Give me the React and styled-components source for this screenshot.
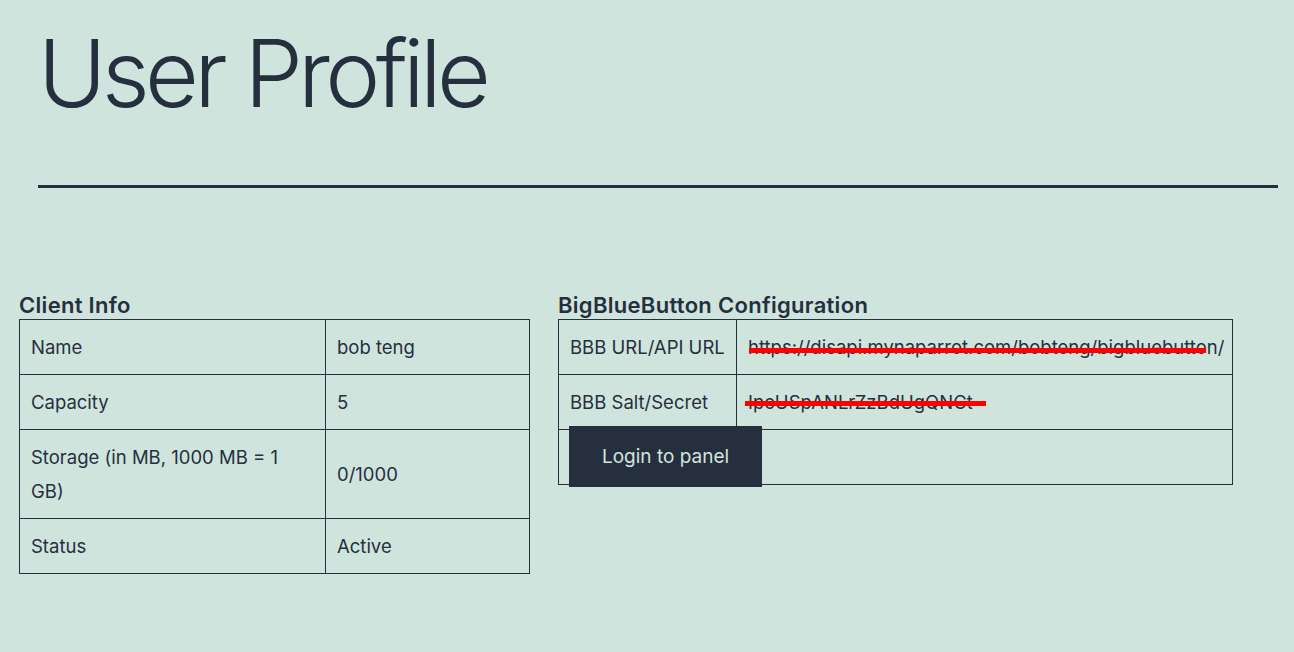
import React from 'react';
import styled, { createGlobalStyle } from 'styled-components';

const GlobalStyle = createGlobalStyle`
    html, body {
        margin: 0;
        padding: 0;
        background: #d0e4de;
    }
    body {
        font-family: Inter, "Noto Sans", sans-serif;
        color: #262f3d;
    }
`;

const Page = styled.div`
    min-height: 652px;
    background: #d0e4de;
    padding-top: 18px;
`;

const Header = styled.header`
    padding: 0 16px 0 38px;
`;

const Title = styled.h1`
    margin: 0;
    font-size: 93px;
    font-weight: 300;
    line-height: 1.2;
    letter-spacing: -4.7px;
`;

const Divider = styled.div`
    height: 3px;
    margin-top: 55px;
    background: #262f3d;
`;

const Content = styled.main`
    display: flex;
    align-items: flex-start;
    gap: 28px;
    margin-top: 104px;
    padding-left: 19px;
`;

const Section = styled.section`
    display: flex;
    flex-direction: column;
`;

const SectionTitle = styled.h2`
    margin: 0 0 1px;
    font-size: 22px;
    font-weight: 600;
    line-height: 26px;
    letter-spacing: 0.3px;
`;

const Table = styled.table`
    border-collapse: collapse;
    table-layout: fixed;
    width: ${(p) => p.width}px;
`;

const Cell = styled.td`
    position: relative;
    border: 1px solid #262f3d;
    padding: 10px ${(p) => (p.narrow ? 18 : 11)}px 10px 11px;
    font-size: 18.5px;
    line-height: 34px;
    vertical-align: middle;
    white-space: ${(p) => (p.nowrap ? 'nowrap' : 'normal')};
`;

const Redact = styled.span`
    position: absolute;
    height: 5px;
    background: #ff0000;
    pointer-events: none;
`;

const Button = styled.button`
    display: block;
    width: 193px;
    height: 61px;
    margin: -14px 0 -13px -1px;
    padding: 0;
    border: none;
    background: #262f3d;
    color: #d3e4df;
    font-family: inherit;
    font-size: 19px;
    cursor: pointer;
`;

const clientRows = [
    ['Name', 'bob teng'],
    ['Capacity', '5'],
    ['Storage (in MB, 1000 MB = 1 GB)', '0/1000'],
    ['Status', 'Active'],
];

function App() {
    return (
        <Page>
            <GlobalStyle />
            <Header>
                <Title>User Profile</Title>
                <Divider />
            </Header>

            <Content>
                <Section>
                    <SectionTitle>Client Info</SectionTitle>
                    <Table width={510}>
                        <colgroup>
                            <col style={{ width: 306 }} />
                            <col style={{ width: 204 }} />
                        </colgroup>
                        <tbody>
                            {clientRows.map(([label, value]) => (
                                <tr key={label}>
                                    <Cell narrow>{label}</Cell>
                                    <Cell>{value}</Cell>
                                </tr>
                            ))}
                        </tbody>
                    </Table>
                </Section>

                <Section>
                    <SectionTitle>BigBlueButton Configuration</SectionTitle>
                    <Table width={674}>
                        <colgroup>
                            <col style={{ width: 178 }} />
                            <col style={{ width: 496 }} />
                        </colgroup>
                        <tbody>
                            <tr>
                                <Cell nowrap>BBB URL/API URL</Cell>
                                <Cell nowrap>
                                    https://disapi.mynaparrot.com/bobteng/bigbluebutton/
                                    <Redact style={{ left: 12, top: 28, width: 457 }} />
                                </Cell>
                            </tr>
                            <tr>
                                <Cell nowrap>BBB Salt/Secret</Cell>
                                <Cell nowrap>
                                    IpcUSpANLrZzBdUgQNCt
                                    <Redact style={{ left: 8, top: 26, width: 241 }} />
                                </Cell>
                            </tr>
                            <tr>
                                <Cell colSpan={2}>
                                    <Button>Login to panel</Button>
                                </Cell>
                            </tr>
                        </tbody>
                    </Table>
                </Section>
            </Content>
        </Page>
    );
}

export default App;
